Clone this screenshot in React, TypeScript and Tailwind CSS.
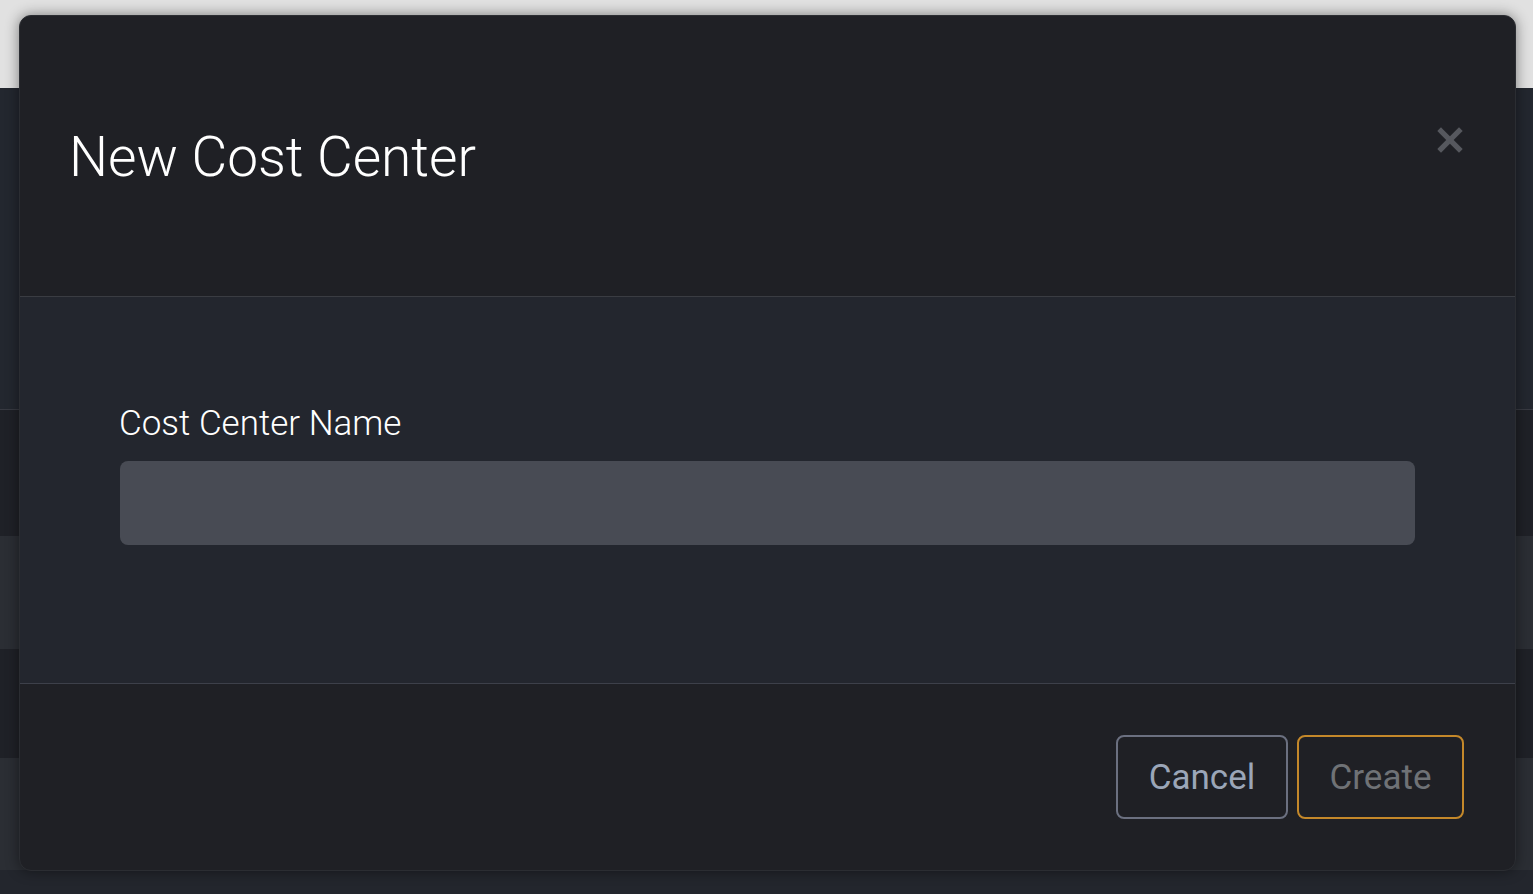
import { X } from 'lucide-react'

// page behind the dialog (only the edges show)
function Backdrop() {
  return (
    <div className="flex h-[894px] w-full flex-col">
      <div className="h-[88px] bg-[#e1e1e1]" />
      <div className="h-[322px] border-b border-[#383a42] bg-[#23272f]" />
      <div className="h-[126px] bg-[#1f2127]" />
      <div className="h-[113px] bg-[#2b2e34]" />
      <div className="h-[109px] bg-[#1f2127]" />
      <div className="h-[112px] bg-[#2b2e34]" />
      <div className="flex-1 bg-[#23262d]" />
    </div>
  )
}

export default function App() {
  return (
    <div
      className="relative h-[894px] w-[1533px] overflow-hidden"
      style={{ fontFamily: 'Roboto, "Liberation Sans", sans-serif' }}
    >
      <Backdrop />

      <div className="absolute left-[19px] top-[15px] flex h-[856px] w-[1497px] flex-col overflow-hidden rounded-[12px] border border-[#2b2d32] bg-[#1f2025] shadow-[0_0_14px_rgba(0,0,0,0.45)]">
        {/* header */}
        <div className="flex h-[281px] shrink-0 items-start justify-between border-b border-[#3a3c42] pl-[49px] pr-[47px] pt-[114px]">
          <h1 className="text-[55px] font-light leading-none text-white">
            New Cost Center
          </h1>
          <button className="-mt-[8px] text-[#56585e]">
            <X size={36} strokeWidth={3.5} strokeLinecap="square" />
          </button>
        </div>

        {/* body */}
        <div className="flex h-[387px] shrink-0 flex-col border-b border-[#3d404a] bg-[#23262e] px-[100px] pt-[107px]">
          <label className="-ml-[1px] text-[35px] font-light leading-[40px] text-white">
            Cost Center Name
          </label>
          <input
            className="mt-[17px] h-[84px] w-full rounded-[8px] bg-[#484b54] px-5 text-[32px] text-white outline-none"
            type="text"
          />
        </div>

        {/* footer */}
        <div className="flex flex-1 items-start justify-end gap-[9px] pr-[51px] pt-[51px]">
          <button className="h-[84px] w-[172px] rounded-[8px] border-2 border-[#6b7080] pt-[3px] text-[35px] text-[#9ba6b8]">
            Cancel
          </button>
          <button className="h-[84px] w-[167px] rounded-[8px] border-2 border-[#c4882a] pt-[3px] text-[35px] text-[#6f7276]">
            Create
          </button>
        </div>
      </div>
    </div>
  )
}
